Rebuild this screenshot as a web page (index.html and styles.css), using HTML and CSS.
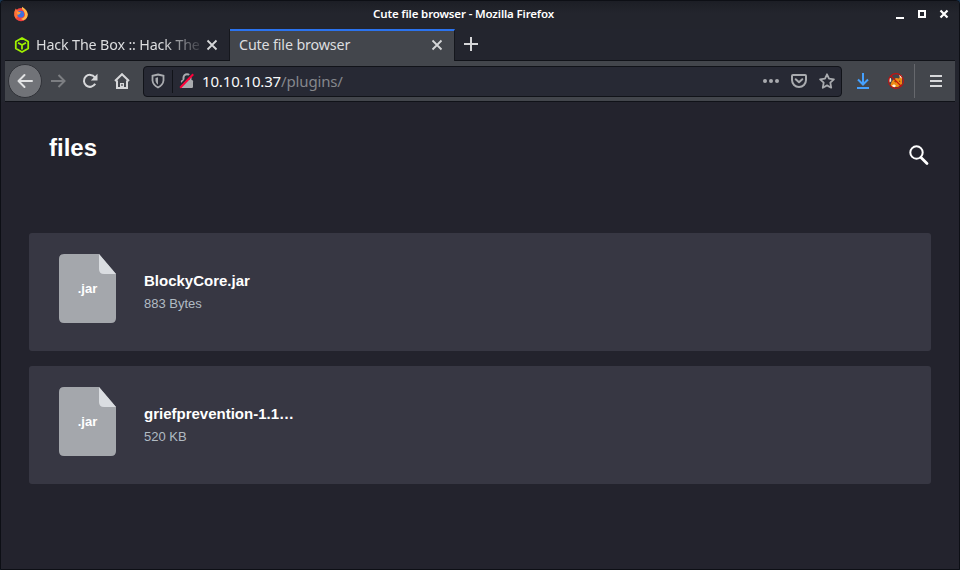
FILE: index.html
```
<!DOCTYPE html>
<html lang="en">
<head>
<meta charset="utf-8">
<title>Cute file browser</title>
<link rel="stylesheet" href="styles.css">
</head>
<body>
<div class="window">
  <header class="titlebar">
    <svg class="firefox" width="16" height="16" viewBox="0 0 16 16">
      <circle cx="8" cy="8.600" r="6.600" fill="#f4433f"/>
      <path d="M1.200 6 2.700 2.500 4.400 4.600 7.500 4.500 8.800 8 5 10 3 13Q.6 10 1.200 6Z" fill="#ff7139"/>
      <path d="M9 .7Q14.500 3.800 14.800 8.600 14.300 13 10.500 14.300L8 13Q12.800 11 11.800 7.500 11.200 4.800 9 3Z" fill="#ffb84a"/>
      <circle cx="7.700" cy="8.200" r="3.400" fill="#3d6fe0"/>
      <path d="M3.500 5.500 8 6.200 6.500 8.200 4.500 9Z" fill="#ff9a3c"/>
    </svg>
    <span class="title">Cute file browser - Mozilla Firefox</span>
    <svg class="controls" width="56" height="12" viewBox="0 0 56 12">
      <path d="M2 10h8" stroke="#fff" stroke-width="2"/>
      <path d="M25 3h6v6h-6z" fill="none" stroke="#fff" stroke-width="2"/>
      <path d="m46.500 2.500 7 7m0-7-7 7" stroke="#fff" stroke-width="2.200"/>
    </svg>
  </header>
  <nav class="tabs">
    <div class="tab">
      <svg class="cube" width="16" height="16" viewBox="0 0 16 16" fill="none" stroke="#9fef00" stroke-width="1.800" stroke-linejoin="round"><path d="m8 1 6.200 3.500v7L8 15l-6.200-3.500v-7zM4 5.700 8 8l4-2.300M8 8v4.500"/></svg>
      <span class="label faded">Hack The Box :: Hack The</span>
      <svg class="close" width="12" height="12" viewBox="0 0 12 12"><path d="m1.500 1.500 9 9m0-9-9 9"/></svg>
    </div>
    <div class="tab active">
      <span class="label">Cute file browser</span>
      <svg class="close" width="12" height="12" viewBox="0 0 12 12"><path d="m1.500 1.500 9 9m0-9-9 9"/></svg>
    </div>
    <svg class="plus" width="14" height="14" viewBox="0 0 14 14"><path d="M7 0v14M0 7h14" stroke="#d5d6d8" stroke-width="2"/></svg>
  </nav>
  <div class="toolbar">
    <div class="back"><svg width="16" height="16" viewBox="0 0 16 16"><path d="M15 8H1.500M7.500 2l-6 6 6 6"/></svg></div>
    <svg class="forward" width="16" height="16" viewBox="0 0 16 16"><path d="M1 8h13.500M8.500 2l6 6-6 6"/></svg>
    <svg class="reload" width="16" height="16" viewBox="0 0 16 16"><path d="M13.200 10.800A6 6 0 1 1 12.800 4.300L14 6"/><path d="M15.500.8v6.700H8.800z" fill="#d7d8da" stroke="none"/></svg>
    <svg class="home" width="16" height="16" viewBox="0 0 16 16"><path d="m1 8 7-6.800L15 8M3 7.500V15h10V7.500"/><path d="M6 15v-5h4v5z" fill="#d7d8da" stroke="none"/><path d="M8 11v2" stroke="#43464c" stroke-width="1.200"/></svg>
    <div class="urlbar">
      <svg class="shield" width="14" height="16" viewBox="0 0 14 16"><path d="M7 1.500 12.500 2.800V7.500Q12 12 7 14.500 2 12 1.500 7.500V2.800z" fill="none" stroke="#a9abaf" stroke-width="1.800"/><path d="M7 4.300 4.500 5v3Q5 10.500 7 11.700z" fill="#a9abaf"/></svg>
      <span class="divider"></span>
      <svg class="lock" width="16" height="16" viewBox="0 0 16 16"><path d="M4.500 7V4.800a3.500 3.500 0 0 1 7 0V7" fill="none" stroke="#a9abaf" stroke-width="2"/><rect x="2" y="7" width="12" height="8" rx="1.300" fill="#a9abaf"/><path d="M0 13.500 13 .5" stroke="#272934" stroke-width="2"/><path d="M1.200 14.700 14.200 1.200" stroke="#ff0039" stroke-width="2"/></svg>
      <span class="url">10.10.10.37<span>/plugins/</span></span>
      <svg class="dots" width="16" height="16" viewBox="0 0 16 16" fill="#a9abaf"><circle cx="2" cy="8" r="2"/><circle cx="8" cy="8" r="2"/><circle cx="14" cy="8" r="2"/></svg>
      <svg class="pocket" width="16" height="16" viewBox="0 0 16 16" fill="none" stroke="#a9abaf" stroke-width="2" stroke-linecap="round" stroke-linejoin="round"><path d="M2 2h12q1 0 1 1v4a7 7 0 0 1-14 0V3q0-1 1-1zM4.700 6.200 8 9.300l3.300-3.100"/></svg>
      <svg class="star" width="16" height="16" viewBox="0 0 16 16"><path d="m8 1.300 2 4.300 4.900.7-3.600 3.400.9 5L8 12.400l-4.200 2.300.9-5L1.100 6.300 6 5.600z" fill="none" stroke="#a9abaf" stroke-width="1.800" stroke-linejoin="round"/></svg>
    </div>
    <svg class="download" width="14" height="16" viewBox="0 0 14 16"><path d="M7 0v11M2 6.500l5 5 5-5M1 15h12" fill="none" stroke="#45a1ff" stroke-width="2"/></svg>
    <svg class="proxy" width="16" height="16" viewBox="0 0 16 16"><path d="M2.500 12Q3 9 5 7l3-2 3 .5L12 3l2 2v6l-4 3H4z" fill="#ee8b14"/><path d="m1 5 2 .3.300 3L1.500 9.500zM10.800 2l1.500 2.500L14 5.500 13.500 2.500zM3.500 13l2.500-1.800 2 1.500L6.500 14.500z" fill="#fff1e0"/><path d="m6.500 8.500 1.500.5M11 8l1.200.5" stroke="#6d3a10"/><circle cx="8" cy="8" r="7.400" fill="none" stroke="#c4120f" stroke-width="1.100"/><path d="m3 3 10 10" stroke="#c4120f" stroke-width="1.100"/></svg>
    <span class="separator"></span>
    <svg class="menu" width="12" height="12" viewBox="0 0 12 12"><path d="M0 1h12M0 6h12M0 11h12" stroke="#d7d8da" stroke-width="2"/></svg>
  </div>
  <main>
    <div class="heading">
      <h1>files</h1>
      <svg width="20" height="21" viewBox="0 0 20 21"><circle cx="7.500" cy="7.500" r="6.200" fill="none" stroke="#fff" stroke-width="2"/><path d="m12 12.500 6 6" stroke="#fff" stroke-width="2.800" stroke-linecap="round"/></svg>
    </div>
    <ul>
      <li>
        <div class="file"><svg width="57" height="69" viewBox="0 0 57 69"><path d="M5 0H40L57 20V64q0 5-5 5H5q-5 0-5-5V5q0-5 5-5z" fill="#a4a7ac"/><path d="M40 0 57 20H45q-5 0-5-5z" fill="#dadde1"/></svg><span>.jar</span></div>
        <div class="info"><b>BlockyCore.jar</b><span>883 Bytes</span></div>
      </li>
      <li>
        <div class="file"><svg width="57" height="69" viewBox="0 0 57 69"><path d="M5 0H40L57 20V64q0 5-5 5H5q-5 0-5-5V5q0-5 5-5z" fill="#a4a7ac"/><path d="M40 0 57 20H45q-5 0-5-5z" fill="#dadde1"/></svg><span>.jar</span></div>
        <div class="info"><b>griefprevention-1.1…</b><span>520 KB</span></div>
      </li>
    </ul>
  </main>
</div>
</body>
</html>
```
FILE: styles.css
```
* { box-sizing: border-box; }
html { background: #193652; }
body { margin: 0; font-family: "Noto Sans", sans-serif; }
svg { display: block; flex: none; }
.window { height: 570px; overflow: hidden; background: #23252e; border: 1px solid #0d0f15; border-radius: 4px 4px 0 0; display: flex; flex-direction: column; }
.titlebar { height: 28px; flex: none; display: grid; grid-template-columns: 60px 1fr 60px; align-items: center; background: linear-gradient(#1c1e25, #23252d 12px); }
.firefox { margin: -2px 0 0 12px; }
.title { color: #fff; font-size: 11.5px; font-weight: 600; line-height: 16px; white-space: nowrap; letter-spacing: -.15px; justify-self: center; margin: -2px 0 0 -33px; }
.controls { justify-self: end; margin: -3px 9px 0 0; }
.tabs { height: 32px; flex: none; display: flex; align-items: stretch; border-bottom: 1px solid #111319; margin: 0 4px; }
.tab { width: 225px; height: 31px; display: flex; align-items: center; padding: 0 11px 0 9px; color: #dcdddf; font-size: 14.3px; letter-spacing: -.15px; border-right: 1px solid #15171d; }
.cube { margin-right: 6px; }
.label { flex: 1; min-width: 0; white-space: nowrap; line-height: 24px; }
.faded { -webkit-mask-image: linear-gradient(90deg, #000 78%, transparent 104%); mask-image: linear-gradient(90deg, #000 78%, transparent 104%); }
.close { margin-left: 7px; fill: none; stroke: #d5d6d8; stroke-width: 1.8; }
.tab.active { height: 32px; background: #43464c; border-top: 2px solid #2b73ee; margin-bottom: -1px; }
.active .label, .active .close { margin-top: -2px; }
.plus { align-self: center; margin: -1px 0 0 9px; }
.toolbar { height: 41px; flex: none; display: flex; align-items: center; margin: 0 4px; background: #43464c; border-bottom: 1px solid #101218; }
.toolbar > svg { fill: none; stroke: #d7d8da; stroke-width: 2; }
.toolbar > .proxy { stroke: none; stroke-width: 1; }
.back { width: 34px; height: 34px; margin-left: 3px; border: 1px solid #303238; border-radius: 50%; background: #717378; display: grid; place-items: center; }
.back svg { fill: none; stroke: #e1e2e3; stroke-width: 2; stroke-linecap: round; stroke-linejoin: round; }
.toolbar > .forward { margin-left: 8px; stroke: #7c7e82; }
.reload, .home { margin-left: 16px; }
.urlbar { width: 699px; height: 31px; display: flex; align-items: center; margin-left: 13px; border: 1px solid #111319; border-radius: 4px; background: #272934; }
.shield { margin-left: 7px; }
.divider { width: 1px; height: 23px; margin-left: 7px; background: #111319; }
.lock { margin-left: 6px; }
.url { flex: 1; margin-left: 7px; line-height: 22px; color: #f9f9fa; font-size: 15px; letter-spacing: -.15px; }
.url span { color: #85878c; }
.pocket, .star { margin-left: 12px; }
.star { margin-right: 6px; }
.download { margin-left: 14px; }
.proxy { margin-left: 18px; }
.separator { width: 1px; height: 34px; margin-left: 10px; background: #66686d; }
.menu { margin-left: 15px; }
main { flex: 1; padding: 0 28px; background: #23232d; font-family: "Liberation Sans", sans-serif; }
.heading { height: 131px; display: flex; justify-content: space-between; padding: 32px 2px 0 20px; }
h1 { margin: 0; color: #fff; font-size: 24px; line-height: 28px; }
.heading svg { margin-top: 11px; }
ul { margin: 0; padding: 0; list-style: none; display: grid; gap: 15px; }
li { height: 118px; display: flex; background: #373743; border-radius: 3px; padding: 21px 30px; }
.file { display: grid; width: 57px; height: 69px; }
.file svg, .file span { grid-area: 1 / 1; }
.file span { z-index: 1; align-self: center; justify-self: center; color: #fff; font-size: 13px; font-weight: 700; line-height: 16px; }
.info { margin: 16px 0 0 28px; display: flex; flex-direction: column; }
.info b { color: #fff; font-size: 15px; line-height: 22px; }
.info span { color: #b1bbc3; font-size: 13px; line-height: 24px; }
```
